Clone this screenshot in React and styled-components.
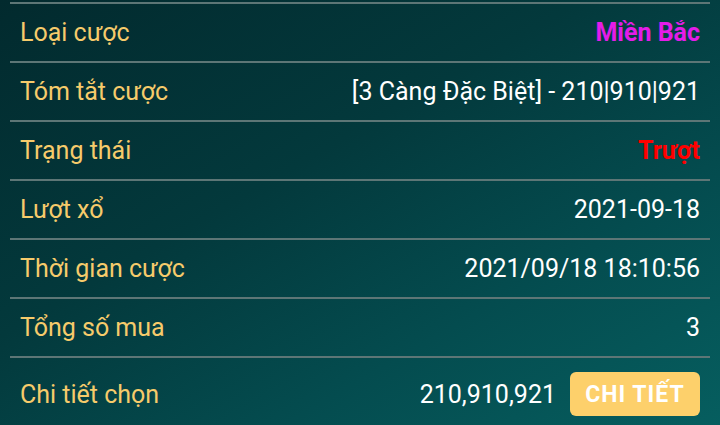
import React from "react";
import styled, { createGlobalStyle } from "styled-components";

const Global = createGlobalStyle`
  html, body { margin: 0; padding: 0; }
  body {
    width: 720px;
    height: 425px;
    overflow: hidden;
    font-family: Roboto, "Noto Sans", sans-serif;
  }
`;

const Panel = styled.div`
  width: 720px;
  height: 425px;
  box-sizing: border-box;
  padding: 2px 10px 0;
  background: linear-gradient(150deg, #022a2e 0%, #03393c 40%, #044c4f 70%, #065e5f 100%);
  overflow: hidden;
`;

const Row = styled.div`
  display: flex;
  align-items: center;
  justify-content: space-between;
  border-top: 2px solid #5d7676;
  padding: 14px 10px;
  min-height: 29px;
`;

const Label = styled.span`
  color: #f6cb6b;
  font-size: 25px;
  line-height: 29px;
`;

const Value = styled.span`
  color: ${(p) => p.$color || "#ffffff"};
  font-size: 25px;
  line-height: 29px;
  font-weight: ${(p) => (p.$bold ? 700 : 400)};
`;

const Right = styled.div`
  display: flex;
  align-items: center;
  gap: 14px;
`;

const Button = styled.button`
  width: 130px;
  height: 44px;
  border: none;
  border-radius: 6px;
  background: #fdd06b;
  color: #ffffff;
  font-family: Roboto, "Noto Sans", sans-serif;
  font-weight: 700;
  font-size: 23px;
  letter-spacing: 1px;
  cursor: pointer;
`;

const rows = [
  { label: "Loại cược", value: "Miền Bắc", color: "#e41ce8", bold: true },
  { label: "Tóm tắt cược", value: "[3 Càng Đặc Biệt] - 210|910|921" },
  { label: "Trạng thái", value: "Trượt", color: "#ff0000", bold: true },
  { label: "Lượt xổ", value: "2021-09-18" },
  { label: "Thời gian cược", value: "2021/09/18 18:10:56" },
  { label: "Tổng số mua", value: "3" },
];

export default function App() {
  return (
    <>
      <Global />
      <Panel>
        {rows.map((r) => (
          <Row key={r.label}>
            <Label>{r.label}</Label>
            <Value $color={r.color} $bold={r.bold}>{r.value}</Value>
          </Row>
        ))}
        <Row>
          <Label>Chi tiết chọn</Label>
          <Right>
            <Value>210,910,921</Value>
            <Button>CHI TIẾT</Button>
          </Right>
        </Row>
      </Panel>
    </>
  );
}
